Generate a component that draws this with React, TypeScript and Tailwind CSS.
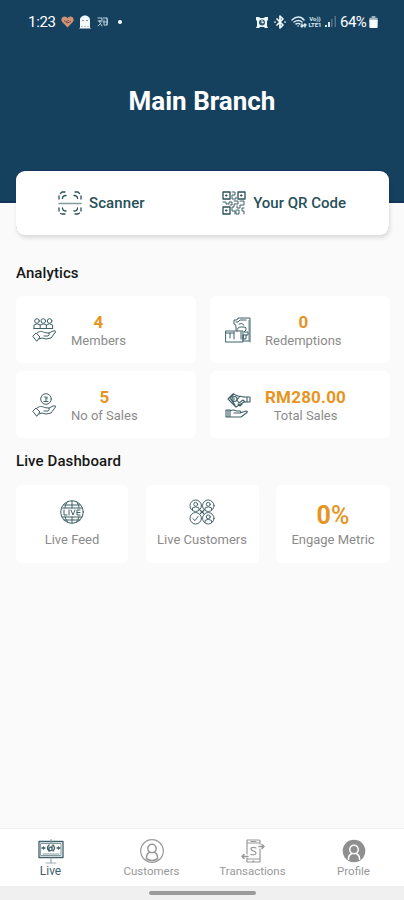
import type { ReactNode, SVGProps } from "react";

const line = {
  fill: "none",
  stroke: "currentColor",
  strokeLinecap: "round",
  strokeLinejoin: "round",
} as const;

type IconProps = SVGProps<SVGSVGElement>;

function Icon({ children, ...props }: IconProps) {
  return (
    <svg width="24" height="24" viewBox="0 0 24 24" strokeWidth="1" {...line} {...props}>
      {children}
    </svg>
  );
}

function StatusBar() {
  return (
    <div className="flex h-11 items-center justify-between pl-7 pr-[26px] text-white">
      <div className="flex items-center">
        <span className="w-[28px] text-[15px] leading-5 tracking-[-0.3px]">1:23</span>
        <svg className="ml-[5px]" width="13" height="12" viewBox="0 0 13 12">
          <path d="M6.500 11.500 1.200 6C-.8 3.500 1 .5 3.600 .6 5 .6 6 1.400 6.500 2.200 7 1.400 8 .6 9.400 .6 12 .5 13.800 3.500 11.800 6Z" fill="#cf9478" />
          <path d="M3 4.500 6 7l4-1.500M5 5.500l3-1" stroke="#855346" fill="none" />
        </svg>
        <svg className="ml-[5px]" width="12" height="14" viewBox="0 0 12 14">
          <path d="M1 5C1 2 3.500.5 6 .5S11 2 11 5v7.500l1 1H0l1-1Z" fill="#f5fafc" />
          <path d="M3 5.500h2m2 0h2M3 12v-1m3 1v-1m3 1v-1" stroke="#7d95a5" />
        </svg>
        <svg className="ml-[6px] text-[#b8cfda]" width="12" height="10" viewBox="0 0 12 10" {...line}>
          <path d="M1 1h4v3H2l3 5M1 9l3-3M6 1h4v7M10 1q1 3 0 7H7V3M6 5h4M1 4h3" />
        </svg>
        <span className="ml-[9px] size-[4px] rounded-sm bg-white" />
      </div>
      <div className="flex items-center">
        <svg width="12" height="13" viewBox="0 0 12 13">
          <path d="M0 1h3l1 1h4l1-1h3v3l-1 1v5l1 2H9l-1-1H4l-1 1H0l1-2V5L0 4Z" fill="#eef7fa" />
          <circle cx="6" cy="6.500" r="3" fill="#315a73" />
          <path d="M6 4v3l2-1" fill="none" stroke="#fff" />
        </svg>
        <svg className="ml-[6px] text-[#f4fafc]" width="12" height="14" viewBox="0 0 12 14" strokeWidth="1.700" {...line}>
          <path d="m3 4 6 6-3 3V1l3 3-6 6M1 7h.1M11 7h.1" />
        </svg>
        <svg className="ml-[5px] text-[#dceaf0]" width="16" height="13" viewBox="0 0 16 13" strokeWidth="1.500" {...line}>
          <path d="M1 4c4-4 9-4 12 0M3 6c3-2 6-2 8 0M5 8c2-1 2-1 4 0M7 10h.1M11 8v3m-1-1 1 1 1-1m2 1V8m-1 1 1-1 1 1" />
        </svg>
        <div className="ml-[1px] flex h-[13px] w-[14px] flex-col items-center text-[6px] font-bold leading-[6.500px] text-[#dceaf0]">
          <span>Vo))</span>
          <span>LTE1</span>
        </div>
        <svg className="ml-[3px]" width="12" height="12" viewBox="0 0 12 12">
          <path d="M0 11h2V9H0Zm3 0h2V6H3Z" fill="#d5e7e7" />
          <path d="M6 11h1.500V3H6Zm3.500 0H11V0H9.500Z" fill="#527587" />
        </svg>
        <span className="ml-[3px] w-[28px] text-[15px] leading-5 tracking-[-0.5px]">64%</span>
        <svg className="ml-px" width="9" height="12" viewBox="0 0 9 13">
          <path d="M2.500 0h4v2h-4ZM0 2h9v4H0Z" fill="#9fb1bb" />
          <rect y="4" width="9" height="9" rx="1" fill="#f7fcff" />
        </svg>
      </div>
    </div>
  );
}

function ScannerIcon() {
  return (
    <Icon strokeWidth="1.300">
      <path d="M1 8V5M2.500 2.500 4 1h3M17 1h3l1.500 1.500M23 5v3M1 17v3M2.500 22.500 4 23h3M17 23h3l1.500-1M23 20v-3M4.500 7.500q0-3 3.500-3M16 4.500q3.500 0 3.500 3M4.500 17q0 3 3.500 3M16 20q3.500 0 3.500-3" />
      <path d="M1 12.500h22" stroke="#82999c" strokeWidth="1.500" />
    </Icon>
  );
}

function QrIcon() {
  return (
    <Icon>
      <path d="M1 1h7v7H1ZM16 1h7v7h-7ZM1 16h7v7H1Z" strokeWidth="1.300" />
      <path d="M4 4h1v1H4ZM19 4h1v1h-1ZM4 19h1v1H4Z" fill="currentColor" />
      <path d="M10 1h3v3h-3v4h4V6M1 11h3v2h3v-2h3v3H8M12 10h4v3h-4v3h-2v4h3v3M18 10h4v4h-4v3h-3v-2M22 17h-2v3h2v3M15 19h2v4h-3v-4" strokeWidth=".9" />
    </Icon>
  );
}

function Palm() {
  return (
    <>
      <path d="m1 18 3-3 4 4-3 4Z" />
      <path d="M5 15c4-3 6-1 8-.3l4 .3q1 2-1 3h-4M17 15l4-2q3-.8 2.500 1L19 20l-5 1-4-1-3 1" />
    </>
  );
}

function MembersIcon() {
  return (
    <Icon>
      <circle cx="5" cy="3" r="2.300" />
      <circle cx="11.300" cy="3" r="2.300" />
      <circle cx="17.600" cy="3" r="2.300" />
      <path d="M2 10.500V7q3-2.500 6.200 0v3.500M8.200 7q3-2.500 6.200 0v3.500M14.400 7q3-2.500 6.200 0v3.500M2 10.500h18.600" />
      <Palm />
    </Icon>
  );
}

function SalesIcon() {
  return (
    <Icon>
      <circle cx="14" cy="6" r="5.300" />
      <path d="M12.500 4H14v4.500m-2 0h4M15 4v2" />
      <Palm />
    </Icon>
  );
}

function RedemptionIcon() {
  return (
    <Icon width="26" height="26" viewBox="0 0 26 26">
      <path d="M23 3h2v21h-2Z" fill="#b8c8ca" stroke="none" />
      <path d="M25 25V1H13q0 2-2 2H9v4q2 0 2 3v3" />
      <path d="M1 14h17v11H1ZM1 16h8M5 16v5M9 15v7M18 24h6M11 5h2l2-2h6M14 7q3-2 5 1" />
      <path d="M12 14q0-4 4-4h3q3 0 2 3l-2 2h4v3h-5v5M16 15v7M18 18v4h3v-4" />
    </Icon>
  );
}

function TotalSalesIcon() {
  return (
    <Icon width="26" height="26" viewBox="0 0 26 26" strokeWidth="1.100">
      <path d="m3 7 5-5 5 2 6 1M3 7l8 8 8-5M9 2 5 6l5 7M7 7q0-2.500 2.500-2.500T12 7t-2.500 2.500T7 7ZM9 6v2M15 4l-3 4 2 3 4-3 2 2" />
      <path d="M19 5h6v5h-5M22 5v5M13 12l2 2 2-2" />
      <path d="M1 18h4v7H1ZM3 18v7M5 19c4-2.500 5 0 8 0h2q2 2-1 2h-5M15 21l6-2q2 0 1 1.500L16 25H5" />
    </Icon>
  );
}

function GlobeIcon() {
  return (
    <Icon>
      <circle cx="12" cy="12" r="11.300" />
      <path d="M8 1.500C6 3 5 6 5 8M16 1.500C18 3 19 6 19 8M12 1v7M12 17v6M4 5h16M2 8h20M2 17h20M4 20h16M5 17q1 4 3 5M19 17q-1 4-3 5" />
      <path d="M4 10v5h3M9 10v5M11 10l2 5 2-5M20 10h-3v5h3M17 12.500h3" />
    </Icon>
  );
}

function CustomerClusterIcon() {
  return (
    <Icon width="26" height="26" strokeWidth=".9">
      {[[6.2, 6.2], [17.8, 6.2], [17.8, 17.8]].map(([x, y], i) => (
        <g key={i} transform={`translate(${x} ${y})`}>
          <circle r="5.300" />
          <circle cy="-1.300" r="1.800" />
          <path d="M-3 4V2q3-2 6 0v2" />
        </g>
      ))}
      <circle cx="6.200" cy="17.800" r="5.300" />
      <path d="m3.500 18 2 2 3-4M10 10l4 4M14 10l-4 4" />
      <circle cx="12" cy="12" r="1" fill="currentColor" />
    </Icon>
  );
}

function LiveIcon() {
  return (
    <Icon width="26" height="25" viewBox="0 0 26 25">
      <path d="M1 2.500h24v16H1Z" strokeWidth="1.300" />
      <path d="M3 4.500h20v12H3ZM13 0v4M13 19v5M5 15h16" stroke="#82999e" />
      <path d="M8 24h10" stroke="#9eadb0" />
      <path d="M11 6q-3 3 0 6M15 6q3 3 0 6M14 7v4q-3 2-3-1t3-1M4 9h3M5.500 8v2M19 9h3M20.500 8v2" strokeWidth="1.300" />
    </Icon>
  );
}

function PersonIcon({ filled = false }: { filled?: boolean }) {
  return filled ? (
    <svg width="24" height="24" viewBox="0 0 24 24">
      <circle cx="12" cy="12" r="11.300" fill="#8f8f8f" />
      <g fill="none" stroke="#fff" strokeWidth="1.500">
        <circle cx="12" cy="10.500" r="4.300" />
        <path d="M6.500 21v-1.500q0-3.500 3.500-5M17.500 21v-1.500q0-3.500-3.500-5" />
      </g>
    </svg>
  ) : (
    <Icon strokeWidth="1.200">
      <circle cx="12" cy="12" r="11.300" />
      <circle cx="12" cy="9.500" r="4.200" strokeWidth="1.500" />
      <path d="M6.500 20v-1.500q0-4 3.500-5.500M17.500 20v-1.500q0-4-3.500-5.500M7 20q5 3 10 0" strokeWidth="1.500" />
    </Icon>
  );
}

function TransactionsIcon() {
  return (
    <Icon strokeWidth="1.200">
      <path d="M6 1h12q1 0 1 1v3M6 1v14M6 19v4h13V10M6 4h13M6 20h13M10 2.500h5M12 22h1" />
      <path d="M15 9q-4-1.500-5 .5 0 2 2.500 2.500 3.500 1 2 3-1 1.500-4.500.5" />
      <path d="M18 7.500h5m-2-2 2 2-2 2M7 17.500H1m2-2-2 2 2 2" strokeWidth="1.500" />
    </Icon>
  );
}

const ink = "text-[#3f6068]";

type StatProps = { icon: ReactNode; value: string; label: string; iconPad: string; gap: string; valueClass?: string };

function Stat({ icon, value, label, iconPad, gap, valueClass = "" }: StatProps) {
  return (
    <div className={`flex items-center rounded-md bg-white ${iconPad} ${gap}`}>
      <div className={ink}>{icon}</div>
      <div className="flex flex-col items-center whitespace-nowrap pt-[2px]">
        <span className={`text-[17px] font-bold leading-[20px] text-[#e7941f] ${valueClass}`}>{value}</span>
        <span className="text-[13px] leading-[17px] text-[#8b8b8b]">{label}</span>
      </div>
    </div>
  );
}

export default function App() {
  return (
    <div className="flex h-[900px] w-[404px] flex-col overflow-hidden bg-[#fafafa] font-['Roboto',sans-serif]">
      <header className="h-[203px] shrink-0 border-b-2 border-[#12345b] bg-[#15415f]">
        <StatusBar />
        <h1 className="mt-[42px] text-center text-[26px] font-bold leading-[30px] text-white">Main Branch</h1>
      </header>

      <main className="flex-1 pl-4 pr-[14px]">
        <section className="relative -mt-8 mr-px flex h-16 items-center rounded-[9px] bg-white text-[#285057] shadow-[0_-1px_0_#12345b,1px_3px_4px_rgba(0,0,0,0.12)]">
          <button className="flex items-center gap-[7px] pl-[42px] text-[15px] font-medium tracking-[0.1px]">
            <ScannerIcon />
            <span>Scanner</span>
          </button>
          <button className="ml-auto flex items-center gap-[7px] pr-[43px] text-[15px] font-medium">
            <QrIcon />
            <span>Your QR Code</span>
          </button>
        </section>

        <h2 className="mt-7 text-[15px] font-medium leading-5 tracking-[0.1px] text-[#171717]">Analytics</h2>
        <section className="mt-[13px] grid grid-cols-[180px_180px] grid-rows-[67px_67px] gap-x-[14px] gap-y-[8px]">
          <Stat icon={<MembersIcon />} value="4" label="Members" iconPad="pl-4" gap="gap-[15px]" />
          <Stat icon={<RedemptionIcon />} value="0" label="Redemptions" iconPad="pl-[15px]" gap="gap-[14px]" />
          <Stat icon={<SalesIcon />} value="5" label="No of Sales" iconPad="pl-4" gap="gap-[15px]" />
          <Stat icon={<TotalSalesIcon />} value="RM280.00" label="Total Sales" iconPad="pl-[15px]" gap="gap-[14px]" valueClass="tracking-[0.2px]" />
        </section>

        <h2 className="mt-[13px] text-[15px] font-medium leading-5 tracking-[0.1px] text-[#171717]">Live Dashboard</h2>
        <section className="mt-[14px] grid h-[78px] grid-cols-[112px_113px_114px] justify-between text-[13px] text-[#8b8b8b]">
          <div className="flex flex-col items-center rounded-md bg-white pt-[15px]">
            <div className={ink}><GlobeIcon /></div>
            <span className="mt-[7px] leading-[17px]">Live Feed</span>
          </div>
          <div className="flex flex-col items-center rounded-md bg-white pt-[14px]">
            <div className={ink}><CustomerClusterIcon /></div>
            <span className="mt-[6px] whitespace-nowrap leading-[17px]">Live Customers</span>
          </div>
          <div className="flex flex-col items-center rounded-md bg-white pt-[15px]">
            <span className="h-[31px] text-[25px] font-bold leading-[31px] text-[#e7941f]">
              0<span className="font-medium">%</span>
            </span>
            <span className="whitespace-nowrap leading-[17px]">Engage Metric</span>
          </div>
        </section>
      </main>

      <nav className="grid h-[57px] shrink-0 grid-cols-4 bg-white pt-[10px] text-[11.500px] leading-[15px] text-[#999] shadow-[0_-1px_1px_rgba(0,0,0,0.03)]">
        <div className={`flex flex-col items-center ${ink}`}>
          <LiveIcon />
          <span className="text-[12px]">Live</span>
        </div>
        <div className="flex flex-col items-center gap-px">
          <PersonIcon />
          <span>Customers</span>
        </div>
        <div className="flex flex-col items-center gap-px">
          <TransactionsIcon />
          <span>Transactions</span>
        </div>
        <div className="flex flex-col items-center gap-px">
          <PersonIcon filled />
          <span>Profile</span>
        </div>
      </nav>
      <footer className="flex h-[14px] shrink-0 justify-center bg-[#f0f0f0] pt-[5px]">
        <div className="h-[4px] w-[107px] rounded-full bg-[#9b9b9b]" />
      </footer>
    </div>
  );
}
